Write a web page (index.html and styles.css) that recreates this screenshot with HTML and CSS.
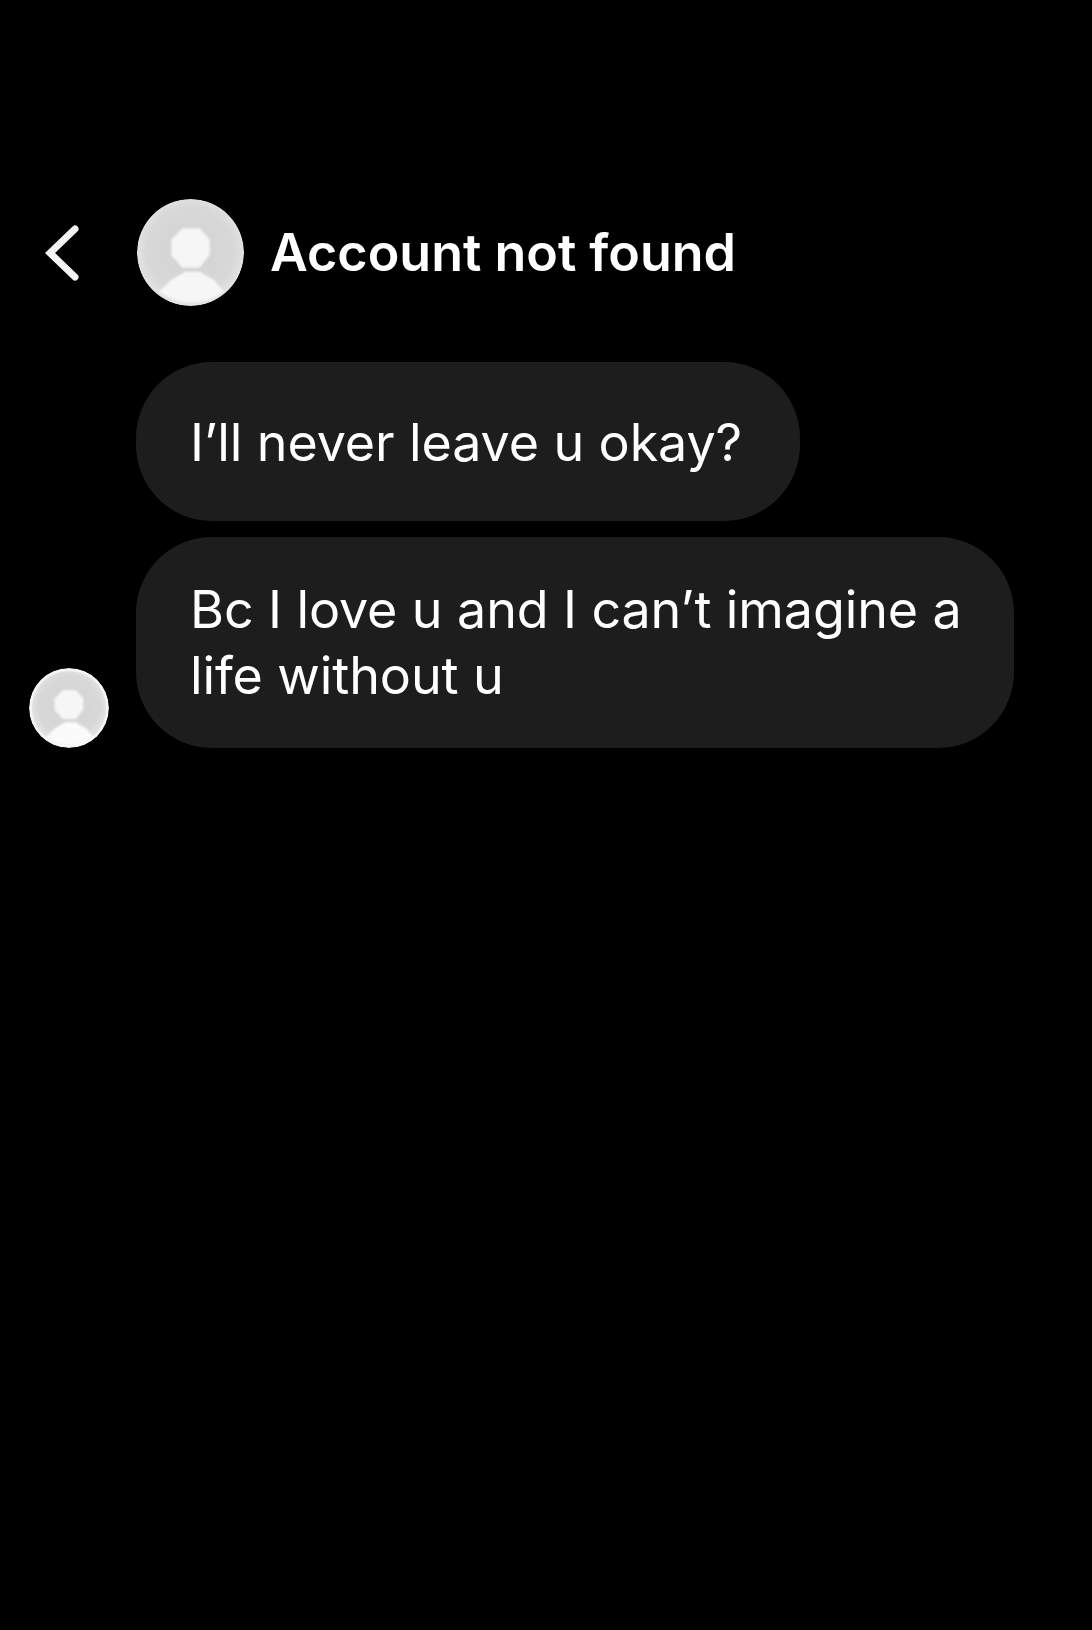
FILE: index.html
```html
<!DOCTYPE html>
<html lang="en">
<head>
<meta charset="utf-8">
<title>Account not found</title>
<link rel="stylesheet" href="styles.css">
</head>
<body>
<main class="screen">
  <header class="header">
    <svg class="back" viewBox="0 0 34 58" aria-hidden="true"><path d="M30 5 L5 29 L30 53"/></svg>
    <svg class="avatar avatar-large" viewBox="0 0 106 106" aria-hidden="true">
      <defs>
        <radialGradient id="disc" cx="50%" cy="48%" r="55%">
          <stop offset="0" stop-color="#d2d2d2"/>
          <stop offset="0.75" stop-color="#d8d8d8"/>
          <stop offset="1" stop-color="#e8e8e8"/>
        </radialGradient>
        <filter id="soft"><feGaussianBlur stdDeviation="1.2"/></filter>
      </defs>
      <circle cx="53" cy="53" r="53" fill="url(#disc)"/>
      <path d="M45 29 H62 L72 40 V55 L62 68 H45 L34 56 V40 Z" fill="#f6f6f6" filter="url(#soft)"/>
      <path d="M22 92 L34 80 L48 72 H62 L76 80 L86 92 A53 53 0 0 1 22 92 Z" fill="#f7f7f7" filter="url(#soft)"/>
    </svg>
    <h1 class="title">Account not found</h1>
  </header>
  <section class="thread">
    <div class="row">
      <p class="bubble">I’ll never leave u okay?</p>
    </div>
    <div class="row row-last">
      <svg class="avatar avatar-small" viewBox="0 0 106 106" aria-hidden="true">
        <circle cx="53" cy="53" r="53" fill="#f4f4f4"/>
        <circle cx="53" cy="53" r="49" fill="url(#disc)"/>
        <path d="M45 29 H62 L72 40 V55 L62 68 H45 L34 56 V40 Z" fill="#f6f6f6" filter="url(#soft)"/>
        <path d="M22 92 L34 80 L48 72 H62 L76 80 L86 92 A53 53 0 0 1 22 92 Z" fill="#fbfbfb" filter="url(#soft)"/>
      </svg>
      <p class="bubble bubble-wide">Bc I love u and I can’t imagine a life without u</p>
    </div>
  </section>
</main>
</body>
</html>
```
FILE: styles.css
```css
html, body {
  margin: 0;
  padding: 0;
  background: #000;
}

.screen {
  box-sizing: border-box;
  width: 1092px;
  height: 1630px;
  padding: 199px 0 0 29px;
  background: #000;
  color: #fff;
  font-family: Inter, "Liberation Sans", Arial, sans-serif;
  overflow: hidden;
}

.header {
  display: flex;
  align-items: center;
  height: 107px;
}

.back {
  width: 34px;
  height: 58px;
  margin-left: 16px;
  margin-right: 58px;
  fill: none;
  stroke: #f4f4f4;
  stroke-width: 7;
  stroke-linecap: round;
  stroke-linejoin: miter;
}

.avatar {
  display: block;
  flex: none;
  border-radius: 50%;
}

.avatar-large {
  width: 107px;
  height: 107px;
}

.avatar-small {
  width: 80px;
  height: 80px;
}

.title {
  margin: 0 0 0 26px;
  font-size: 52px;
  font-weight: 600;
  line-height: 60px;
  white-space: nowrap;
}

.thread {
  display: flex;
  flex-direction: column;
  gap: 16px;
  margin-top: 56px;
}

.row {
  display: flex;
  align-items: flex-end;
  padding-left: 107px;
}

.row-last {
  padding-left: 0;
  gap: 27px;
}

.bubble {
  box-sizing: border-box;
  width: 664px;
  height: 159px;
  margin: 0;
  padding: 47px 54px;
  border-radius: 76px;
  background: #1d1d1d;
  font-size: 52px;
  line-height: 67px;
  letter-spacing: -0.1px;
  white-space: nowrap;
}

.bubble-wide {
  width: 878px;
  height: 211px;
  padding: 40px 36px 0 54px;
  line-height: 66px;
  white-space: normal;
}
```
